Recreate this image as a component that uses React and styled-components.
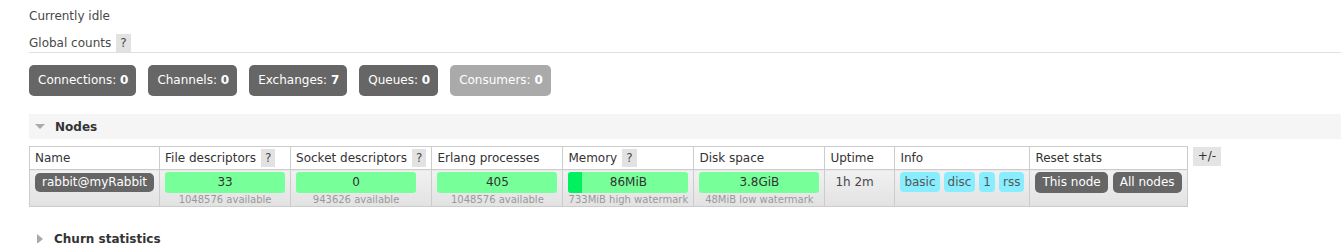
import React from 'react';
import styled, { createGlobalStyle } from 'styled-components';

const GlobalStyle = createGlobalStyle`
    body {
        margin: 0;
        font-family: "DejaVu Sans", Verdana, sans-serif;
        font-size: 12px;
        color: #484848;
        background: #fff;
    }
`

const Page = styled.div`
    padding: 8px 0 0 29px;
`

const Status = styled.div`
    line-height: 16px;
`

const Heading = styled.div`
    display: flex;
    align-items: center;
    height: 19px;
    margin-top: 9px;
    border-bottom: 1px solid #e0e0e0;
`

const Help = styled.span`
    display: inline-block;
    height: 18px;
    line-height: 18px;
    padding: 0 4px;
    margin-left: 5px;
    background: #e2e2e2;
    color: #484848;
`

const Counters = styled.div`
    display: flex;
    gap: 12px;
    margin-top: 12px;
`

const Counter = styled.div`
    height: 31px;
    line-height: 31px;
    padding: 0 8px 0 9px;
    border-radius: 5px;
    color: #fff;
    background: ${({ muted }) => (muted ? '#aaa' : '#666')};
    b { font-weight: bold; }
`

const Section = styled.div`
    margin-top: ${({ top }) => top}px;
`

const SectionHeader = styled.div`
    display: flex;
    align-items: center;
    height: 25px;
    background: ${({ open }) => (open ? '#f5f5f5' : 'transparent')};
    font-weight: bold;
    font-size: 12px;
    color: #333;
`

const ArrowSlot = styled.span`
    display: flex;
    justify-content: center;
    width: 22px;
    margin-right: ${({ open }) => (open ? 4 : 3)}px;
`

const Arrow = styled.span`
    width: 0;
    height: 0;
    ${({ open }) => open
        ? 'border-left: 5px solid transparent; border-right: 5px solid transparent; border-top: 5px solid #aaa;'
        : 'border-top: 5px solid transparent; border-bottom: 5px solid transparent; border-left: 6px solid #aaa;'}
`

const TableRow = styled.div`
    display: flex;
    align-items: flex-start;
    margin-top: 7px;
`

const Table = styled.table`
    border-collapse: collapse;
    table-layout: fixed;
    border: 1px solid #ccc;
`

const Th = styled.th`
    width: ${({ w }) => w}px;
    height: 22px;
    padding: 0 5px;
    border: 1px solid #ccc;
    background: #fff;
    font-weight: normal;
    text-align: left;
    vertical-align: middle;
    white-space: nowrap;
    color: #333;
`

const Td = styled.td`
    padding: ${({ pad }) => pad || '2px 5px 1px 5px'};
    border: 1px solid #ccc;
    background: linear-gradient(to bottom, #f1f1f1, #e2e2e2);
    vertical-align: top;
    white-space: nowrap;
`

const NodeName = styled.span`
    display: inline-block;
    height: 19px;
    line-height: 19px;
    margin-top: 1px;
    padding: 0 7px;
    border-radius: 5px;
    background: #666;
    color: #fff;
`

const Gauge = styled.div`
    width: 120px;
`

const Bar = styled.div`
    position: relative;
    height: 21px;
    line-height: 21px;
    border-radius: 3px;
    overflow: hidden;
    background: #77ff99;
    text-align: center;
    color: #333;
`

const BarFill = styled.span`
    position: absolute;
    left: 0;
    top: 0;
    bottom: 0;
    background: #00f060;
`

const BarText = styled.span`
    position: relative;
`

const Sub = styled.div`
    margin-top: 1px;
    text-align: center;
    font-size: 10px;
    line-height: 11px;
    color: #999;
`

const Badges = styled.div`
    display: flex;
    gap: 4px;
`

const Badge = styled.span`
    height: 20px;
    line-height: 20px;
    padding: 0 4px;
    border-radius: 4px;
    background: #88eeff;
    color: #555;
`

const Actions = styled.div`
    display: flex;
    gap: 5px;
`

const ActionButton = styled.span`
    height: 21px;
    line-height: 21px;
    padding: 0 7px;
    border-radius: 5px;
    background: #666;
    color: #fff;
`

const Toggle = styled.span`
    margin: 1px 0 0 5px;
    height: 19px;
    line-height: 19px;
    padding: 0 5px;
    background: #e4e4e4;
    color: #333;
`

const counters = [
    { label: 'Connections', value: 0 },
    { label: 'Channels', value: 0 },
    { label: 'Exchanges', value: 7 },
    { label: 'Queues', value: 0 },
    { label: 'Consumers', value: 0, muted: true },
]

const columns = [
    { title: 'Name', w: 117 },
    { title: 'File descriptors', w: 119, help: true },
    { title: 'Socket descriptors', w: 129, help: true },
    { title: 'Erlang processes', w: 119 },
    { title: 'Memory', w: 119, help: true },
    { title: 'Disk space', w: 119 },
    { title: 'Uptime', w: 59 },
    { title: 'Info', w: 124 },
    { title: 'Reset stats', w: 145 },
]

const gauges = [
    { value: '33', sub: '1048576 available' },
    { value: '0', sub: '943626 available' },
    { value: '405', sub: '1048576 available' },
    { value: '86MiB', sub: '733MiB high watermark', fill: 14 },
    { value: '3.8GiB', sub: '48MiB low watermark' },
]

const App = () => {
    return (
        <Page>
            <GlobalStyle/>
            <Status>Currently idle</Status>
            <Heading>Global counts <Help>?</Help></Heading>
            <Counters>
                {counters.map(c => (
                    <Counter key={c.label} muted={c.muted}>{c.label}: <b>{c.value}</b></Counter>
                ))}
            </Counters>

            <Section top={18}>
                <SectionHeader open>
                    <ArrowSlot open><Arrow open/></ArrowSlot>
                    Nodes
                </SectionHeader>
                <TableRow>
                    <Table>
                        <thead>
                        <tr>
                            {columns.map(col => (
                                <Th key={col.title} w={col.w}>
                                    {col.title}{col.help && <Help>?</Help>}
                                </Th>
                            ))}
                        </tr>
                        </thead>
                        <tbody>
                        <tr>
                            <Td><NodeName>rabbit@myRabbit</NodeName></Td>
                            {gauges.map(g => (
                                <Td key={g.sub + g.value}>
                                    <Gauge>
                                        <Bar>
                                            {g.fill && <BarFill style={{ width: g.fill }}/>}
                                            <BarText>{g.value}</BarText>
                                        </Bar>
                                        <Sub>{g.sub}</Sub>
                                    </Gauge>
                                </Td>
                            ))}
                            <Td pad="5px 5px 1px 10px">1h 2m</Td>
                            <Td>
                                <Badges>
                                    {['basic', 'disc', '1', 'rss'].map(b => <Badge key={b}>{b}</Badge>)}
                                </Badges>
                            </Td>
                            <Td>
                                <Actions>
                                    <ActionButton>This node</ActionButton>
                                    <ActionButton>All nodes</ActionButton>
                                </Actions>
                            </Td>
                        </tr>
                        </tbody>
                    </Table>
                    <Toggle>+/-</Toggle>
                </TableRow>
            </Section>

            <Section top={19}>
                <SectionHeader>
                    <ArrowSlot><Arrow/></ArrowSlot>
                    Churn statistics
                </SectionHeader>
            </Section>
        </Page>
    );
};

export default App;
